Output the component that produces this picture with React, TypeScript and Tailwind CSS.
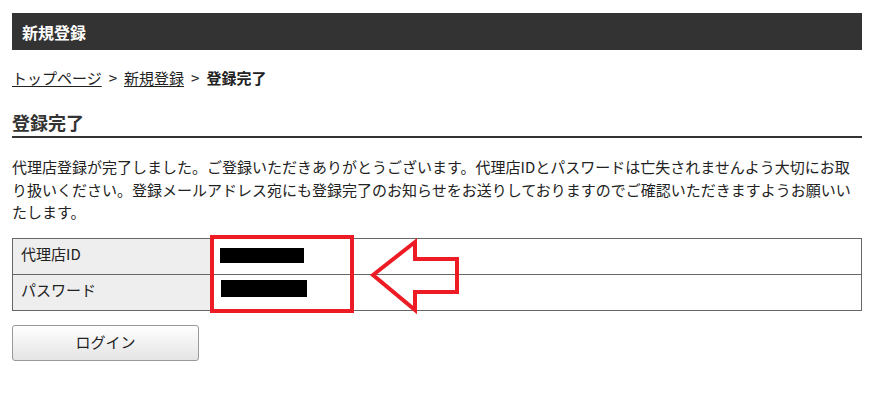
import type { JSX } from "react"

export default function App(): JSX.Element {
  return (
    <div className="relative w-[887px] h-[395px] bg-white text-[#222] font-['Meiryo','Noto_Sans_CJK_JP',sans-serif]">
      <div className="pl-3 pt-[13px] w-[862px]">
        <div className="h-[37px] bg-[#333333] pl-[10px] flex items-center">
          <h1 className="text-white font-bold text-[16px] leading-none">新規登録</h1>
        </div>

        {/* パンくず */}
        <div className="mt-[17px] text-[15px] leading-[22px]">
          <a className="underline underline-offset-2">トップページ</a>
          <span className="inline-block mx-[7px]">&gt;</span>
          <a className="underline underline-offset-2">新規登録</a>
          <span className="inline-block mx-[7px]">&gt;</span>
          <span className="font-bold">登録完了</span>
        </div>

        <h2 className="mt-[23px] h-[26px] text-[18px] leading-[21px] font-bold text-[#333] border-b-2 border-[#333]">
          登録完了
        </h2>

        <p className="mt-[18px] text-[15px] leading-[22.5px]">
          代理店登録が完了しました。ご登録いただきありがとうございます。代理店IDとパスワードは亡失されませんよう大切にお取り扱いください。登録メールアドレス宛にも登録完了のお知らせをお送りしておりますのでご確認いただきますようお願いいたします。
        </p>

        <div className="relative mt-[14px]">
          <table className="w-[850px] border-collapse text-[15px]">
            <tbody>
              <tr className="h-[36px]">
                <th className="w-[198px] bg-[#eeeeee] border border-[#666] text-left font-normal pl-2 pb-[3px]">代理店ID</th>
                <td className="border border-[#666]"></td>
              </tr>
              <tr className="h-[36px]">
                <th className="w-[198px] bg-[#eeeeee] border border-[#666] text-left font-normal pl-2 pb-[3px]">パスワード</th>
                <td className="border border-[#666]"></td>
              </tr>
            </tbody>
          </table>

          {/* 伏字 */}
          <div className="absolute left-[208px] top-[10px] w-[84px] h-[15px] bg-black" />
          <div className="absolute left-[209px] top-[42px] w-[86px] h-[17px] bg-black" />
          {/* 赤枠 */}
          <div className="absolute left-[198px] top-[-3px] w-[144px] h-[78px] border-4 border-[#ed1c24]" />
          {/* 矢印 */}
          <svg className="absolute left-[353px] top-[-3px]" width="100" height="80" viewBox="0 0 100 80">
            <path
              d="M8 40 L50 7 L50 24 L92 24 L92 57 L50 57 L50 75 Z"
              fill="none"
              stroke="#ed1c24"
              strokeWidth="4"
            />
          </svg>
        </div>

        <button className="mt-[14px] w-[187px] h-[36px] rounded-[3px] border border-[#999] bg-gradient-to-b from-white to-[#e4e4e4] text-[15px] text-[#222]">
          ログイン
        </button>
      </div>
    </div>
  )
}
